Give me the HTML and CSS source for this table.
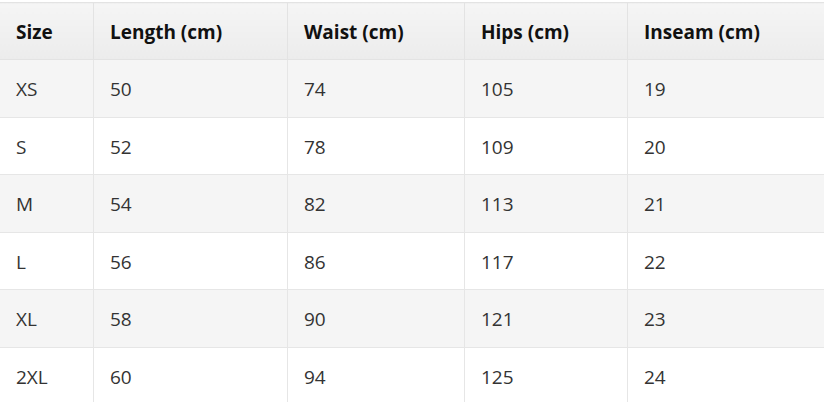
FILE: index.html
```html
<!DOCTYPE html>
<html lang="en">
<head>
<meta charset="utf-8">
<title>Size chart</title>
<link rel="stylesheet" href="styles.css">
</head>
<body>
<table class="size-table">
  <colgroup>
    <col class="c1"><col class="c2"><col class="c3"><col class="c4"><col class="c5">
  </colgroup>
  <thead>
    <tr><th>Size</th><th>Length (cm)</th><th>Waist (cm)</th><th>Hips (cm)</th><th>Inseam (cm)</th></tr>
  </thead>
  <tbody>
    <tr><td>XS</td><td>50</td><td>74</td><td>105</td><td>19</td></tr>
    <tr><td>S</td><td>52</td><td>78</td><td>109</td><td>20</td></tr>
    <tr><td>M</td><td>54</td><td>82</td><td>113</td><td>21</td></tr>
    <tr><td>L</td><td>56</td><td>86</td><td>117</td><td>22</td></tr>
    <tr><td>XL</td><td>58</td><td>90</td><td>121</td><td>23</td></tr>
    <tr><td>2XL</td><td>60</td><td>94</td><td>125</td><td>24</td></tr>
  </tbody>
</table>
</body>
</html>
```
FILE: styles.css
```css
html, body {
  margin: 0;
  padding: 0;
  background: #ffffff;
}
body {
  padding-top: 2px;
  font-family: "Open Sans", "Noto Sans", "Liberation Sans", sans-serif;
  overflow: hidden;
}
.size-table {
  border-collapse: collapse;
  table-layout: fixed;
  width: 825px;
  margin-left: -1px;
  font-size: 19px;
}
.c1 { width: 94px; }
.c2 { width: 194px; }
.c3 { width: 177px; }
.c4 { width: 163px; }
.c5 { width: 197px; }
.size-table th,
.size-table td {
  border: 1px solid #e6e6e6;
  padding: 18px 16px 16px;
  text-align: left;
  vertical-align: middle;
  white-space: nowrap;
}
.size-table th {
  font-weight: 700;
  color: #111111;
  line-height: 22px;
  background: linear-gradient(#f5f5f5, #ececec);
  border-color: #e3e3e3;
}
.size-table td {
  font-weight: 400;
  color: #333333;
  line-height: 22.6px;
  padding-top: 18px;
  padding-bottom: 16px;
}
.size-table tbody tr:nth-child(odd) td {
  background: #f5f5f5;
}
.size-table tbody tr:nth-child(even) td {
  background: #ffffff;
}
```
